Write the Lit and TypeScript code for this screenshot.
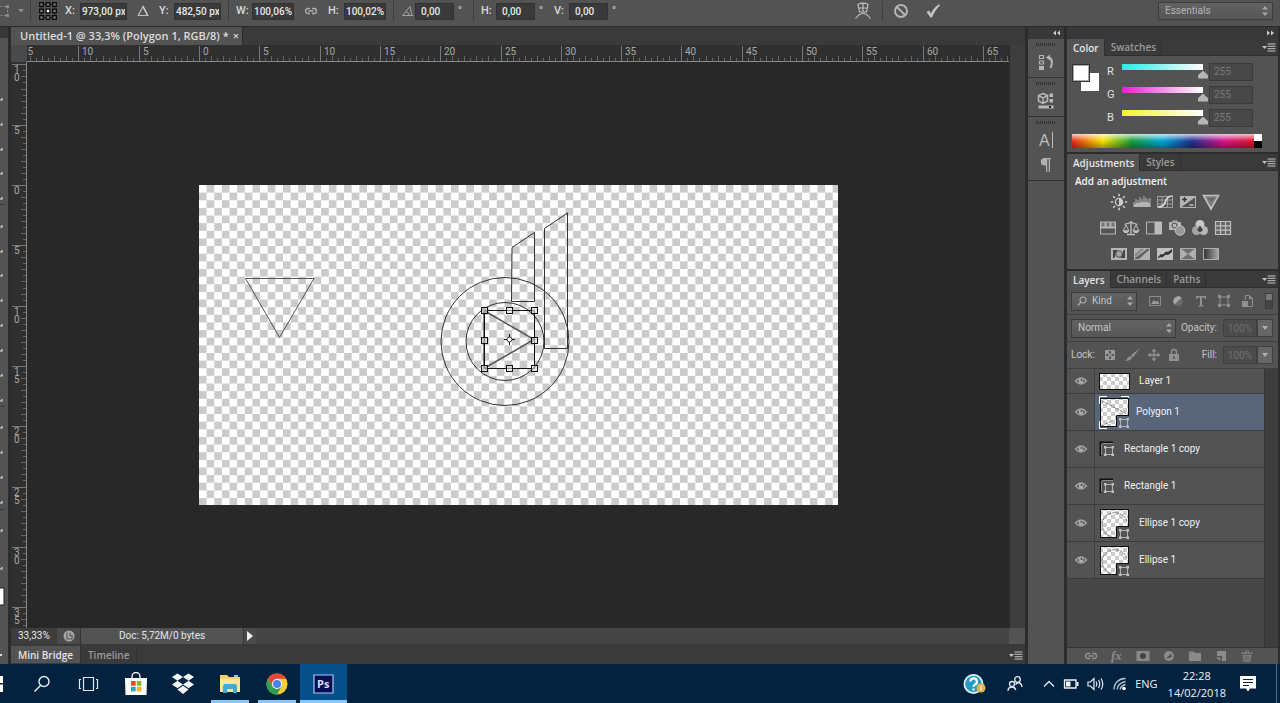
import { LitElement, html, svg, css } from "lit";
import { customElement } from "lit/decorators.js";
import { classMap } from "lit/directives/class-map.js";

const UNIT = 12.06;

const icons: Record<string, [number, number, unknown]> = {
  transform: [14, 16, svg`<path d="M-3 3.500H7.500V12.500H-3" fill="none" stroke="#8a8a8a" stroke-dasharray="2 1.500"/><path d="M6 2h3v3H6zM6 11h3v3H6z" fill="#8a8a8a"/>`],
  caret: [6, 4, svg`<path d="M0 0h6L3 3.500z" fill="#8f8f8f"/>`],
  refpoint: [20, 20, svg`<path d="M3.500 3.500h13v13h-13z" fill="none" stroke="#222"/>${[0, 1, 2].map((r) => [0, 1, 2].map((c) => svg`<rect x=${1 + c * 6.5} y=${1 + r * 6.5} width="5" height="5" fill="#0c0c0c"/><rect x=${2.3 + c * 6.5} y=${2.3 + r * 6.5} width="2.400" height="2.400" fill=${r === 1 && c === 1 ? "#fff" : "#777"}/>`))}`],
  delta: [12, 12, svg`<path d="M6 1.500 10.700 10.500H1.300z" fill="none" stroke="#bdbdbd" stroke-width="1.200"/><path d="M6 1.500 10.700 10.500" stroke="#c8c8c8" stroke-width="1.500"/>`],
  link: [14, 10, svg`<path d="M6 7.500H4a2.500 2.500 0 0 1 0-5h2M8 2.500h2a2.500 2.500 0 0 1 0 5H8M4.500 5h5" fill="none" stroke="#b0b0b0" stroke-width="1.300"/>`],
  angle: [14, 12, svg`<path d="M9 1.500 1.500 10.500H12.500M9 1.500 11 10.500M5 6.500q3 1 3 4" fill="none" stroke="#a4a4a4"/>`],
  warp: [18, 20, svg`<path d="M4 3.500Q9 .8 14 3.500L12.500 11H5.500zM4.500 7.500Q9 6 13.500 7.500M9 2v9M1.500 17.500Q9 7.500 16.500 17.500" fill="none" stroke="#c0c0c0" stroke-width="1.200"/>`],
  cancel: [16, 16, svg`<circle cx="8" cy="8" r="6" fill="none" stroke="#b4b4b4" stroke-width="2"/><path d="m4 4 8 8" stroke="#b4b4b4" stroke-width="2"/>`],
  check: [16, 16, svg`<path d="M1.500 9 4 7.500 6 10.500Q9 4 14 1.200L15 2.500Q10 7 7 14.500H5.500z" fill="#c4c4c4"/>`],
  updown: [8, 12, svg`<path d="M1 4.500 4 1l3 3.500zM1 7.500h6L4 11z" fill="#a8a8a8"/>`],
  down: [8, 6, svg`<path d="M1 1h6L4 5z" fill="#b0b0b0"/>`],
  menu: [14, 9, svg`<path d="M0 3h5L2.500 6z" fill="#c4c4c4"/><path d="M5.500 1h8M5.500 3.300h8M5.500 5.700h8M5.500 8h8" stroke="#c4c4c4"/>`],
  collapse: [9, 6, svg`<path d="M4 .5v5L1 3zM8 .5v5L5 3z" fill="#ccc"/>`],
  expand: [9, 6, svg`<path d="M1 .5v5L4 3zM5 .5v5L8 3z" fill="#ccc"/>`],
  history: [18, 18, svg`<path d="M2.500 2.500h4v3h-4zM2.500 8h4v3h-4z" fill="none" stroke="#b4b4b4" stroke-width="1.200"/><path d="M2 13h5v4H2z" fill="#b4b4b4"/><path d="M9 4.500 13 1.500v6z" fill="#b4b4b4"/><path d="M12 4.500q5 2.500 1.500 10.500" fill="none" stroke="#b4b4b4" stroke-width="2"/>`],
  props: [18, 18, svg`<path d="M6 1.500 10.500 3.500V9L6 11.300 1.500 9V3.500zM1.500 3.700 6 6l4.500-2.300M6 6v5" fill="none" stroke="#b8b8b8" stroke-width="1.500"/><path d="M12.500 1.500h3.500V5h-3.500zM12.500 7h3.500v3.500h-3.500zM1.500 13.500h15v3H1.500z" fill="#b8b8b8"/><path d="M12 15h2" stroke="#222" stroke-width="2"/>`],
  character: [18, 18, svg`<path d="M15.500 1v16" stroke="#bdbdbd"/><text x="2" y="15" font-size="16" font-family="Liberation Sans, sans-serif" fill="#bdbdbd">A</text>`],
  paragraph: [18, 18, svg`<path d="M9 9.500H7A3.800 3.800 0 0 1 7 2h7v1.300h-1V16h-1.300V3.300H10.300V16H9z" fill="#b0b0b0"/>`],
  sun: [18, 18, svg`<circle cx="9" cy="9" r="3.600" fill="none" stroke="#ccc" stroke-width="1.300"/><path d="M9 5.500a3.500 3.500 0 0 1 0 7z" fill="#ccc"/><path d="M9 .8v2.400M9 14.800v2.400M.8 9h2.400M14.800 9h2.400M3.200 3.200 5 5M13 13l1.800 1.800M3.200 14.800 5 13M13 5l1.800-1.800" stroke="#ccc" stroke-width="1.600"/>`],
  levels: [18, 18, svg`<path d="M.5 14V9h1v2h1V6h1v4h1V7h1v3h1V4h1v5h1V6h1v3h1V3h1v6h1V5h1v4h1V6h1v4h1V5h1v9z" fill="#b4b4b4"/>`],
  curves: [18, 18, svg`<path d="M1.500 3.500h15v11h-15zM1.500 7h15M1.500 11h15M6 3.500v11M11.500 3.500v11" fill="none" stroke="#a0a0a0"/><path d="M2 14q6 0 7.500-5.500T16.500 3" fill="none" stroke="#ddd" stroke-width="1.600"/>`],
  exposure: [18, 18, svg`<path d="M1 3h16v12H1z" fill="#b5b5b5"/><path d="M2.500 14 16 4.500V14z" fill="#505050"/><path d="M3 6.500h5M5.500 4v5" stroke="#333" stroke-width="1.300"/><path d="M10.500 12h4" stroke="#ccc" stroke-width="1.300"/>`],
  vibrance: [18, 18, svg`<path d="M1.500 2.500h15L9 16z" fill="#7d7d7d" stroke="#c0c0c0" stroke-width="1.600"/><path d="M5 5h8L9 9z" fill="#6a6a6a"/>`],
  hue: [18, 18, svg`<path d="M1 2.500h16v13H1z" fill="#b5b5b5"/><path d="M2 9.500h14v5H2z" fill="#555"/><path d="M2.500 3.500h3v4h-3zM7.500 3.500h3v4h-3zM12.500 3.500h3v4h-3z" fill="#757575"/>`],
  balance: [18, 18, svg`<path d="M9 2v13M2.500 5.500 9 3.500l6.500 2M5 15.500h8" stroke="#c0c0c0" fill="none" stroke-width="1.300"/><path d="M4 6 1 12h6zM14 6l-3 6h6z" fill="none" stroke="#c0c0c0"/><path d="M.8 11.500h6.400L5.500 14h-3zM10.800 11.500h6.400L15.500 14h-3z" fill="#c0c0c0"/>`],
  bw: [18, 18, svg`<path d="M1.500 3h15v12h-15z" fill="#555" stroke="#b5b5b5"/><path d="M9.500 3h7v12h-7z" fill="#bbb"/>`],
  photo: [18, 18, svg`<path d="M1 3h3l1-1.500h4L10 3h3v8H1z" fill="#b5b5b5"/><circle cx="6.500" cy="6.500" r="2.500" fill="#b5b5b5" stroke="#444"/><circle cx="12" cy="11.500" r="4.800" fill="#989898" stroke="#c8c8c8"/>`],
  mixer: [18, 18, svg`<circle cx="9" cy="5.500" r="4.500" fill="#c8c8c8"/><circle cx="5.500" cy="11.500" r="4.500" fill="#a5a5a5"/><circle cx="12.500" cy="11.500" r="4.500" fill="#b8b8b8"/><path d="M9 6.500 12 11 9 13.500 6 11z" fill="#444"/>`],
  lookup: [18, 18, svg`<path d="M1.500 2.500h15v13h-15zM1.500 6.800h15M1.500 11.200h15M6.500 2.500v13M11.500 2.500v13" fill="#666" stroke="#c0c0c0" stroke-width="1.200"/>`],
  invert: [18, 18, svg`<path d="M1 3h16v12H1z" fill="#b5b5b5"/><path d="M3 5h4.500L4.500 13H3zM15 13h-4.500l3-8H15z" fill="#444"/><circle cx="9" cy="9" r="3.300" fill="#a4a4a4" stroke="#555"/>`],
  posterize: [18, 18, svg`<path d="M1 3h16v12H1z" fill="#b0b0b0"/><path d="M2 13 14 4h2v1L6 14H2z" fill="#626262"/><path d="M2 9 8 4h3L2 12z" fill="#858585"/>`],
  threshold: [18, 18, svg`<path d="M1 3h16v12H1z" fill="#c0c0c0"/><path d="m2 12 3-3 2 .5 3-3 2 .5 4-3v3l-4 3-2-.5-4 3-2-.5-2 1.500z" fill="#333"/>`],
  selective: [18, 18, svg`<path d="M1 3h16v12H1z" fill="#707070"/><path d="m1 3 8 6-8 6zM17 3 9 9l8 6z" fill="#b0b0b0"/><path d="M1.500 3.500h15v11h-15z" fill="none" stroke="#aaa"/>`],
  gradient: [18, 18, svg`<defs><linearGradient id="gm"><stop stop-color="#303030"/><stop offset="1" stop-color="#aaa"/></linearGradient></defs><path d="M1.500 3.500h15v11h-15z" fill="url(#gm)" stroke="#b0b0b0"/>`],
  search: [10, 10, svg`<circle cx="6" cy="4" r="3" fill="none" stroke="#aaa" stroke-width="1.200"/><path d="M4 6 1 9.500" stroke="#aaa" stroke-width="1.300"/>`],
  pixel: [14, 14, svg`<path d="M1.500 2.500h11v9h-11z" fill="none" stroke="#8c8c8c"/><path d="m3 10 3-4 2 2 1.500-1.500L11.500 10z" fill="#999"/>`],
  adjust: [14, 14, svg`<circle cx="7" cy="7" r="5" fill="#6c6c6c"/><path d="M3.500 10.500A5 5 0 0 1 10.500 3.500z" fill="#aaa"/>`],
  type: [14, 14, svg`<path d="M2 2h10v3h-1l-.5-1.500H8V11l1.500.5v1h-5v-1L6 11V3.500H3.500L3 5H2z" fill="#909090"/>`],
  shape: [14, 14, svg`<path d="M3 3h8v8H3z" fill="none" stroke="#909090"/><path d="M1 1h3v3H1zM10 1h3v3h-3zM1 10h3v3H1zM10 10h3v3h-3z" fill="#909090"/>`],
  smart: [14, 14, svg`<path d="M5.500 6V1.500h4l3 3v8H8" fill="none" stroke="#909090"/><path d="M9 1v4h4zM2 7h6v6H2z" fill="#909090"/>`],
  lockpix: [14, 14, svg`<path d="M2.500 2.500h9v9h-9z" fill="none" stroke="#999"/><path d="M3 3h3v3H3zM8 3h3v3H8zM5.500 5.500h3v3h-3zM3 8h3v3H3zM8 8h3v3H8z" fill="#999"/>`],
  brush: [16, 14, svg`<path d="M15.500.5 9 9.500 6.500 7.500z" fill="#909090"/><path d="M8 10Q6 13.500.5 12.500 3 12 3.500 10T7 8.500z" fill="#909090"/>`],
  move: [14, 14, svg`<path d="M7 2v10M2 7h10" stroke="#909090" stroke-width="1.300"/><path d="M7 .5 9.500 3.500h-5zM7 13.500l2.500-3h-5zM.5 7l3-2.500v5zM13.500 7l-3-2.500v5z" fill="#909090"/>`],
  lock: [12, 14, svg`<path d="M3.500 6V4a2.500 2.500 0 0 1 5 0v2" fill="none" stroke="#909090" stroke-width="1.500"/><path d="M1 6h10v7H1z" fill="#909090"/><path d="M6 8v3" stroke="#555" stroke-width="1.500"/>`],
  eye: [14, 12, svg`<path d="M1.500 6Q7 0 12.500 6 7 12 1.500 6z" fill="none" stroke="#a4a4a4" stroke-width="1.300"/><circle cx="7" cy="6" r="2.400" fill="#b0b0b0"/><circle cx="7.500" cy="5" r="1" fill="#444"/>`],
  fx: [14, 14, svg`<text x="1" y="11" font-size="13" font-style="italic" font-weight="700" font-family="Liberation Serif, serif" fill="#8a8a8a">fx</text>`],
  mask: [14, 14, svg`<path d="M.5 2h13v10H.5z" fill="#8a8a8a"/><circle cx="7" cy="7" r="3" fill="#444"/>`],
  fill: [14, 14, svg`<circle cx="7" cy="7" r="5" fill="#8a8a8a"/><path d="M4 9.500 9.500 4.500V8z" fill="#484848"/>`],
  folder: [14, 14, svg`<path d="M1 2.500h5l1 1.500h6v8H1z" fill="#8a8a8a"/>`],
  page: [14, 14, svg`<path d="M3 2h9v10H8V7H3z" fill="#8a8a8a"/><path d="M2 8.500h4.500V12z" fill="#8a8a8a"/>`],
  trash: [14, 14, svg`<path d="M2.500 6h9l-1 7h-7zM1.500 3.500h11V5h-11zM5 1.500h4V4H8V2.500H6V4H5z" fill="#7e7e7e"/><path d="M5 7v5M7 7v5M9 7v5" stroke="#555" stroke-width=".7"/>`],
  proxy: [14, 14, svg`<circle cx="7" cy="7" r="5.500" fill="#a8a8a8"/><path d="M5 3.500v6.500h5V6.500H8V3.500" fill="none" stroke="#555" stroke-width="1.200"/>`],
  play: [8, 10, svg`<path d="M1 0v10l6-5z" fill="#eee"/>`],
  tsearch: [18, 18, svg`<circle cx="11" cy="6.500" r="5" fill="none" stroke="#e8eef4" stroke-width="1.400"/><path d="M7.500 10.500 1.500 16.500" stroke="#e8eef4" stroke-width="1.400"/>`],
  taskview: [22, 16, svg`<path d="M5.500 1.500h10v13h-10zM3 3.500H1.500v9H3M18 3.500h1.500v9H18" fill="none" stroke="#e0e8f0" stroke-width="1.200"/>`],
  store: [24, 24, svg`<path d="M8 7V4.500a4 4 0 0 1 8 0V7" fill="none" stroke="#fff" stroke-width="1.300"/><path d="M1 6h22l-.5 17h-21z" fill="#fff"/><path d="M7 9h4.700v4.700H7z" fill="#e34a26"/><path d="M12.700 9h4.700v4.700h-4.700z" fill="#7fb82a"/><path d="M7 14.700h4.700v4.700H7z" fill="#27a0d8"/><path d="M12.700 14.700h4.700v4.700h-4.700z" fill="#f5b31d"/>`],
  dropbox: [24, 22, svg`<path d="m6.500.5 5.500 3.600-5.500 3.700L1 4.100zM17.500.5 23 4.100l-5.500 3.700L12 4.100zM1 11.500l5.500-3.700 5.500 3.700-5.500 3.700zM17.500 7.800l5.500 3.700-5.500 3.700-5.500-3.700zM6.500 16.500l5.500-3.700 5.500 3.700-5.500 4.500z" fill="#f4f7fa"/>`],
  explorer: [22, 20, svg`<path d="M1 1h7l2 2h11v15H1z" fill="#f3cf6b"/><path d="M1 5h20v13H1z" fill="#fbe59a"/><path d="M4 19v-7q0-2 2-2h10q2 0 2 2v7h-4v-4H8v4z" fill="#42a8d4"/><path d="M15 1h4v2h-4z" fill="#8fd0a0"/>`],
  chrome: [22, 22, svg`<circle cx="11" cy="11" r="10.500" fill="#f7cb3c"/><path d="M11 5.750h9.100A10.500 10.500 0 0 0 1.900 5.750L6.500 13.500z" fill="#e2483a"/><path d="M1.900 5.750A10.500 10.500 0 0 0 11 21.500l4.600-8L11 16 6.400 13.500z" fill="#2f9e55"/><circle cx="11" cy="11" r="5" fill="#fff"/><circle cx="11" cy="11" r="4" fill="#4486ee"/>`],
  ps: [22, 20, svg`<path d="M1 1h19v18H1z" fill="#0a0d52" stroke="#a9c8f5" stroke-width="1.200"/><text x="4" y="14" font-size="11" font-weight="700" font-family="Open Sans, sans-serif" fill="#cfe0ff">Ps</text>`],
  start: [4, 16, svg`<path d="M0 0h3v7H0zM0 8.500h3V16H0z" fill="#fff"/>`],
  help: [24, 22, svg`<circle cx="10.500" cy="11" r="10" fill="#e8f6fb"/><circle cx="10.500" cy="11" r="8.300" fill="#249ac4"/><path d="M7.500 8.500a3.200 3.200 0 1 1 4.500 3q-1.500.8-1.500 2.500M10.500 15.500v2" fill="none" stroke="#fff" stroke-width="2.200"/><circle cx="18" cy="15" r="4.500" fill="#eab04a"/><path d="M18 12.500v5" stroke="#fff3cf" stroke-width="1.500"/>`],
  people: [16, 18, svg`<circle cx="10.500" cy="4.500" r="2.800" fill="none" stroke="#e4ebf2" stroke-width="1.300"/><circle cx="5" cy="9" r="2.500" fill="none" stroke="#e4ebf2" stroke-width="1.300"/><path d="M1 16q0-4 4-4 3 0 3.800 3M8.500 9.500q2-2 4-1.500t2.500 4" fill="none" stroke="#e4ebf2" stroke-width="1.300"/>`],
  chevron: [12, 8, svg`<path d="m1 6.500 5-5 5 5" fill="none" stroke="#e4ebf2" stroke-width="1.300"/>`],
  battery: [16, 12, svg`<path d="M1.500 2h11.500v8H1.500z" fill="none" stroke="#f0f4f8" stroke-width="1.300"/><path d="M3 3.500h4.500v5H3zM13.500 4h2v4h-2z" fill="#f0f4f8"/>`],
  volume: [18, 14, svg`<path d="M1 5h2.500L7 1.500v11L3.500 9H1z" fill="none" stroke="#e4ebf2" stroke-width="1.200"/><path d="M9 4.500q1.500 2.500 0 5M11.500 3q2.500 4 0 8M14 1.500q3.500 5.500 0 11" fill="none" stroke="#e4ebf2" stroke-width="1.200"/>`],
  wifi: [14, 14, svg`<path d="M1 12.500A11 11 0 0 1 12.500 1.500M4 12.500Q5 6 12.500 4.500M7 12.500Q8 8.500 12.500 7.500" fill="none" stroke="#b8c8d6" stroke-width="1.300"/><circle cx="11" cy="11.500" r="1.800" fill="#fff"/>`],
  notes: [18, 18, svg`<path d="M1 1h16v12.500H11L9 16.500 7 13.500H1z" fill="#fff"/><path d="M4 4.500h10M4 7.500h10M4 10.500h6" stroke="#042240" stroke-width="1.200"/>`],
};

const icon = (name: string) => {
  const [w, h, body] = icons[name];
  return html`<svg class="ico" width=${w} height=${h} viewBox="0 0 ${w} ${h}" aria-hidden="true">${body}</svg>`;
};

const tabs = (names: string[]) => html`
  <div class="tabs">
    ${names.map((n, i) => html`<button class=${classMap({ tab: true, on: i === 0 })}>${n}</button>`)}
    <button class="menu" aria-label="Panel menu">${icon("menu")}</button>
  </div>`;

const checker = (id: string, cell: number) => svg`
  <pattern id=${id} width=${cell * 2} height=${cell * 2} patternUnits="userSpaceOnUse">
    <rect width=${cell * 2} height=${cell * 2} fill="#fff"/>
    <rect x=${cell} width=${cell} height=${cell} fill="#cbcbcb"/>
    <rect y=${cell} width=${cell} height=${cell} fill="#cbcbcb"/>
  </pattern>`;

const base = css`
  * { box-sizing: border-box; }
  button, input, select { font: inherit; color: inherit; margin: 0; border: 0; padding: 0; background: none; border-radius: 0; }
  .ico { display: block; flex: none; }
  .tabs { display: flex; height: 17px; background: #3a3a3a; border-bottom: 1px solid #2e2e2e; font: 600 10px/16px "Open Sans", sans-serif; color: #9a9a9a; }
  .tab { padding: 0 5px 0 6px; border-right: 1px solid #303030; height: 16px; white-space: nowrap; }
  .tab.on { background: #535353; color: #e4e4e4; height: 17px; }
  .menu { margin-left: auto; padding: 0 2px; }
`;

@customElement("options-bar")
class OptionsBar extends LitElement {
  static styles = [base, css`
    :host { display: flex; align-items: center; height: 27px; flex: none; padding-bottom: 4px; background: #535353; border-bottom: 1px solid #2b2b2b; color: #d8d8d8; font: 11px/16px Roboto, sans-serif; }
    .sep { width: 1px; height: 20px; background: #3e3e3e; margin: 0 7px; }
    .field { display: flex; align-items: center; }
    .field span { width: 15px; font-weight: 500; }
    .field input { height: 17px; width: 47px; text-align: right; background: #3a3a3a; border: 1px solid #323232; color: #e8e8e8; font-size: 10px; font-weight: 500; padding: 0 1px; }
    .mid span { width: 16px; }
    .mid input { width: 42px; }
    .short input { width: 39px; text-align: left; padding-left: 5px; }
    .deg { width: 12px; padding-left: 4px; }
    .deg + .field { margin-left: 7px; }
    .gap { padding: 0 10px; }
    .start { display: flex; align-items: center; width: 23px; gap: 4px; }
    .anchor { margin-right: 7px; }
    .spacer { flex: 1; }
    .commit { display: flex; align-items: center; margin-right: 214px; }
    .commit button { padding: 0 3px; }
    .commit .check { padding-left: 13px; }
    .space { display: grid; width: 115px; height: 18px; margin-right: 7px; align-items: center; background: linear-gradient(#626262, #565656); border: 1px solid #3c3c3c; }
    .space > * { grid-area: 1 / 1; }
    .space select { appearance: none; width: 100%; padding-left: 6px; color: #b5b5b5; font-size: 10px; }
    .space .ico { justify-self: end; margin-right: 3px; pointer-events: none; }
  `];
  field(label: string, value: string, kind = "") {
    return html`<label class="field ${kind}">${label ? html`<span>${label}</span>` : ""}<input .value=${value} aria-label=${label || "Angle"}></label>`;
  }
  render() {
    return html`
      <div class="start">${icon("transform")}${icon("caret")}</div>
      <div class="sep"></div>
      <button class="anchor" aria-label="Reference point">${icon("refpoint")}</button>
      ${this.field("X:", "973,00 px")}
      <div class="gap">${icon("delta")}</div>
      ${this.field("Y:", "482,50 px")}
      <div class="sep"></div>
      ${this.field("W:", "100,06%", "mid")}
      <div class="gap">${icon("link")}</div>
      ${this.field("H:", "100,02%", "mid")}
      <div class="sep"></div>
      ${icon("angle")}
      ${this.field("", "0,00", "short")}<span class="deg">°</span>
      <div class="sep"></div>
      ${this.field("H:", "0,00", "short")}<span class="deg">°</span>
      ${this.field("V:", "0,00", "short")}<span class="deg">°</span>
      <div class="spacer"></div>
      <div class="commit">
        <button aria-label="Warp">${icon("warp")}</button>
        <div class="sep"></div>
        <button aria-label="Cancel">${icon("cancel")}</button>
        <button class="check" aria-label="Commit">${icon("check")}</button>
      </div>
      <div class="space"><select aria-label="Workspace"><option>Essentials</option></select>${icon("updown")}</div>`;
  }
}

@customElement("document-window")
class DocumentWindow extends LitElement {
  static styles = [base, css`
    :host { display: flex; flex-direction: column; flex: 1; min-width: 0; margin-left: 3px; background: #383838; color: #d8d8d8; font: 11px/16px Roboto, sans-serif; }
    .titles { display: flex; height: 18px; background: #3a3a3a; }
    .title { display: flex; align-items: center; gap: 4px; padding: 0 3px 0 9px; background: #535353; border-right: 1px solid #2c2c2c; font: 600 11px/18px "Open Sans", sans-serif; white-space: nowrap; color: #dcdcdc; }
    .view { flex: 1; min-height: 0; display: grid; grid-template: 17px minmax(0, 1fr) / 16px minmax(0, 1fr) 16px; background: #2f2f2f; }
    .corner { background: #4a4a4a; }
    .ruler { display: block; width: 100%; height: 100%; overflow: hidden; }
    .ruler text { font: 10px Roboto, sans-serif; fill: #a8a8a8; }
    .board { background: #282828; display: flex; align-items: center; justify-content: center; overflow: hidden; }
    .bar { background: #3e3e3e; border-left: 1px solid #2a2a2a; }
    .status { display: flex; height: 16px; background: #444; align-items: stretch; font-size: 10px; line-height: 16px; color: #e6e6e6; }
    .zoom { width: 46px; padding: 0 0 0 7px; background: #3d3d3d; color: inherit; }
    .proxy { width: 23px; display: grid; place-items: center; background: #4a4a4a; }
    .doc { width: 163px; text-align: center; background: #535353; border-left: 1px solid #333; }
    .go { width: 13px; display: grid; place-items: center; background: #4a4a4a; border-left: 1px solid #333; }
    .grip { width: 16px; margin-left: auto; background: #535353; }
    .tabs { margin-top: 2px; height: 18px; border: 0; }
    .tab, .tab.on { height: 17px; padding: 0 7px; }
  `];
  horizontal() {
    const out = [];
    for (let i = -30; i <= 134; i++) {
      const x = Math.round(172 + (i * UNIT) / 2);
      const major = i % 10 === 0;
      out.push(svg`<path d="M${x + 0.5} ${major ? 1 : i % 2 ? 13 : 11}V16" stroke=${major ? "#777" : "#666"}/>`);
      if (major) out.push(svg`<text x=${x + 4} y="10">${Math.abs(i / 2)}</text>`);
    }
    return out;
  }
  vertical() {
    const out = [];
    for (let i = -20; i <= 75; i++) {
      const y = Math.round(123 + (i * UNIT) / 2);
      const major = i % 10 === 0;
      out.push(svg`<path d="M${major ? 1 : i % 2 ? 12 : 10} ${y + 0.5}H15" stroke=${major ? "#777" : "#666"}/>`);
      if (major) String(Math.abs(i / 2)).split("").forEach((d, n) => out.push(svg`<text x="3" y=${y + 9 + n * 8}>${d}</text>`));
    }
    return out;
  }
  artwork() {
    const handles = [[285, 125], [310, 125], [335, 125], [285, 155], [335, 155], [285, 183], [310, 183], [335, 183]];
    return html`<svg width="639" height="320" viewBox="0 0 639 320" role="img" aria-label="Artwork">
      <defs>${checker("board", 7.635)}</defs>
      <rect width="639" height="320" fill="url(#board)"/>
      <g fill="none" stroke="#333">
        <path d="M46.500 93.500H115L80.500 152.500z" stroke="#555"/>
        <circle cx="306" cy="156.500" r="64"/>
        <circle cx="306" cy="156.500" r="39"/>
        <path d="M313 62.500 335.500 47.500V116.500H312.500z"/>
        <path d="M345.500 43.500 368.500 28V163.500H345.500z"/>
        <path d="M285 125.500 335 154.500 285 183.500z" stroke="#555" stroke-width="1.500"/>
        <path d="M285.500 125.500H335.500V183.500H285.500z" stroke="#111"/>
        ${handles.map(([x, y]) => svg`<rect x=${x - 2.5} y=${y - 2.5} width="6" height="6" stroke="#111" fill="#ddd" fill-opacity=".6"/>`)}
        <circle cx="310.500" cy="154.500" r="2.500" fill="#fff"/>
        <path d="M310.500 149v3M310.500 157v3M305 154.500h3M313 154.500h3" stroke="#111"/>
      </g>
    </svg>`;
  }
  render() {
    return html`
      <div class="titles"><div class="title"><span>Untitled-1 @ 33,3% (Polygon 1, RGB/8) *</span><button aria-label="Close">×</button></div></div>
      <div class="view">
        <div class="corner"></div>
        <svg class="ruler">${this.horizontal()}<path d="M0 16.500H4000" stroke="#888"/></svg>
        <div class="bar"></div>
        <svg class="ruler">${this.vertical()}<path d="M15.500 0V4000" stroke="#888"/></svg>
        <div class="board">${this.artwork()}</div>
        <div class="bar"></div>
      </div>
      <div class="status">
        <input class="zoom" aria-label="Zoom" .value=${"33,33%"}>
        <div class="proxy">${icon("proxy")}</div>
        <div class="doc">Doc: 5,72M/0 bytes</div>
        <button class="go" aria-label="Status options">${icon("play")}</button>
        <div class="grip"></div>
      </div>
      ${tabs(["Mini Bridge", "Timeline"])}`;
  }
}

@customElement("color-panel")
class ColorPanel extends LitElement {
  static styles = [base, css`
    :host { display: block; background: #535353; color: #e0e0e0; font: 11px/16px Roboto, sans-serif; height: 113px; }
    .body { padding: 4px 0 0 5px; }
    .mix { display: flex; height: 74px; }
    .swatches { width: 35px; padding-top: 4px; display: grid; grid-template: repeat(3, 9px) / repeat(3, 9px); align-content: start; }
    .front { grid-area: 1 / 1 / 3 / 3; background: #fff; border: 1px solid #333; outline: 1px solid #aaa; outline-offset: -2px; z-index: 1; }
    .back { grid-area: 2 / 2 / 4 / 4; background: #fff; }
    .row { display: flex; align-items: center; height: 23px; }
    .row span { width: 15px; }
    .slide { width: 81px; height: 15px; margin-right: 6px; }
    .track { height: 6px; }
    .r { background: linear-gradient(90deg, #2fe6e6, #fff); }
    .g { background: linear-gradient(90deg, #e61fd6, #fff); }
    .b { background: linear-gradient(90deg, #f4f42a, #fff); }
    input[type="range"] { appearance: none; display: block; width: 91px; height: 9px; margin-left: -5px; }
    input[type="range"]::-webkit-slider-thumb { appearance: none; width: 10px; height: 8px; background: #b5b5b5; clip-path: polygon(50% 0, 100% 60%, 100% 100%, 0 100%, 0 60%); }
    .val { width: 44px; height: 18px; background: #484848; border: 1px solid #3a3a3a; color: #7a7a7a; padding-left: 4px; font-size: 10px; }
    .ramp { display: flex; width: 190px; height: 14px; }
    .hues { flex: 1; background: linear-gradient(rgba(255,255,255,.75), rgba(255,255,255,0) 50%, rgba(0,0,0,.35)), linear-gradient(90deg, #e8281c, #f6e500 17%, #17a03c 33%, #00a6dc 50%, #23318f 66%, #d8148c 83%, #d81a28); }
    .ends { width: 8px; background: linear-gradient(#fff 50%, #000 50%); }
  `];
  render() {
    return html`${tabs(["Color", "Swatches"])}
      <div class="body">
        <div class="mix">
          <div class="swatches"><div class="front"></div><div class="back"></div></div>
          <div>${["R", "G", "B"].map((c) => html`
            <div class="row"><span>${c}</span>
              <div class="slide"><div class="track ${c.toLowerCase()}"></div><input type="range" max="255" .value=${"255"} aria-label="${c} slider"></div>
              <input class="val" .value=${"255"} aria-label=${c}>
            </div>`)}</div>
        </div>
        <div class="ramp"><div class="hues"></div><div class="ends"></div></div>
      </div>`;
  }
}

@customElement("adjustments-panel")
class AdjustmentsPanel extends LitElement {
  static styles = [base, css`
    :host { display: block; background: #535353; height: 115px; }
    h2 { margin: 0; padding: 2px 0 0 8px; font: 600 10px/16px "Open Sans", sans-serif; color: #f4f4f4; }
    .row { display: flex; justify-content: center; gap: 5px; height: 26px; align-items: center; padding-right: 15px; }
  `];
  render() {
    const rows = [["sun", "levels", "curves", "exposure", "vibrance"], ["hue", "balance", "bw", "photo", "mixer", "lookup"], ["invert", "posterize", "threshold", "selective", "gradient"]];
    return html`${tabs(["Adjustments", "Styles"])}<h2>Add an adjustment</h2>
      ${rows.map((r) => html`<div class="row">${r.map((n) => html`<button aria-label=${n}>${icon(n)}</button>`)}</div>`)}`;
  }
}

type Layer = { name: string; kind: "flat" | "shape" | "small"; art?: string; on?: boolean };

@customElement("layers-panel")
class LayersPanel extends LitElement {
  static styles = [base, css`
    :host { display: flex; flex-direction: column; flex: 1; min-height: 0; background: #535353; color: #c4c4c4; font: 10px/16px Roboto, sans-serif; }
    .row { display: flex; align-items: center; height: 27px; padding: 0 5px 0 4px; border-bottom: 1px solid #404040; }
    .pick { display: grid; align-items: center; height: 19px; background: linear-gradient(#626262, #575757); border: 1px solid #3c3c3c; }
    .pick > * { grid-area: 1 / 1; }
    .pick select { appearance: none; width: 100%; height: 17px; padding-left: 6px; }
    .pick .ico:last-child { justify-self: end; margin-right: 2px; pointer-events: none; }
    .kind { width: 66px; }
    .kind .ico:first-child { margin-left: 5px; pointer-events: none; }
    .kind select { padding-left: 20px; }
    .mode { width: 105px; }
    .filters { display: flex; gap: 9px; margin-left: 11px; }
    .toggle { margin-left: auto; width: 8px; height: 16px; background: linear-gradient(#777 40%, #444 40%); border: 1px solid #3c3c3c; }
    .amount { display: flex; align-items: center; margin-left: auto; gap: 6px; }
    .amount div { display: flex; }
    .amount input { width: 34px; height: 18px; text-align: right; padding-right: 4px; background: #4c4c4c; border: 1px solid #404040; color: #707070; }
    .amount button { width: 16px; height: 18px; display: grid; place-items: center; background: #666; border: 1px solid #404040; }
    .locks { display: flex; gap: 7px; align-items: center; margin-left: 8px; }
    .main { flex: 1; min-height: 0; display: flex; background: #464646; }
    .list { flex: 1; min-width: 0; margin: 0; padding: 0; list-style: none; color: #f0f0f0; }
    .scroll { width: 14px; background: #3d3d3d; border-left: 1px solid #333; }
    .layer { display: flex; align-items: center; height: 37px; background: #535353; border-bottom: 1px solid #3c3c3c; }
    .layer.flat { height: 25px; }
    .eye { width: 28px; height: 100%; display: grid; place-items: center; border-right: 1px solid #404040; }
    .body { flex: 1; height: 100%; display: flex; align-items: center; gap: 9px; padding-left: 4px; }
    .on .body { background: #596579; gap: 6px; }
    .foot { display: flex; justify-content: center; gap: 12px; align-items: center; height: 17px; border-top: 1px solid #333; padding-right: 8px; }
    .foot button:first-child { opacity: .7; }
  `];
  thumb(l: Layer, i: number) {
    const id = "t" + i;
    if (l.kind === "flat") return html`<svg class="ico" width="31" height="17"><defs>${checker(id, 4)}</defs><rect x=".5" y=".5" width="30" height="16" fill="url(#${id})" stroke="#111"/></svg>`;
    const badge = (x: number, y: number) => svg`<g transform="translate(${x} ${y})"><rect x="-2" y="-2" width="13" height="13" fill=${l.on ? "#596579" : "#535353"}/><path d="M1.500 1.500h7v7h-7z" fill="none" stroke="#b0b0b0"/><path d="M0 0h2.500v2.500H0zM7.500 0H10v2.500H7.500zM0 7.500h2.500V10H0zM7.500 7.500H10V10H7.500z" fill="#c0c0c0"/></g>`;
    if (l.kind === "small") return html`<svg class="ico" width="16" height="16"><path d="M1.500 15V1.500H14" fill="none" stroke="#111" stroke-width="2"/><path d="M3 14V3H14" fill="none" stroke="#e4e4e4"/>${badge(5, 5)}</svg>`;
    return html`<svg class="ico" width="31" height="33"><defs>${checker(id, 4)}</defs>
      ${l.on ? svg`<path d="M.5 8V.5H8M22 .5h7.500V8M.5 25v7.500H8M22 32.500h7.500V25" fill="none" stroke="#fff"/>` : ""}
      <rect x="1.500" y="2.500" width="28" height="28" fill="url(#${id})" stroke="#111"/>
      <path d=${l.art ?? ""} fill="none" stroke="#777" stroke-dasharray="3 1"/>
      <path d="M17.500 31V19.500H30" fill="none" stroke="#111"/>${badge(20, 22)}</svg>`;
  }
  amount(label: string, id: string) {
    return html`<div class="amount"><label for=${id}>${label}</label><div><input id=${id} .value=${"100%"}><button aria-label="${label} slider">${icon("down")}</button></div></div>`;
  }
  render() {
    const ring = "M3 17A13 13 0 0 1 28 14M3 17Q4 27 13 30";
    const layers: Layer[] = [
      { name: "Layer 1", kind: "flat" },
      { name: "Polygon 1", kind: "shape", art: "M3 5 28 18M3 30 14 24", on: true },
      { name: "Rectangle 1 copy", kind: "small" },
      { name: "Rectangle 1", kind: "small" },
      { name: "Ellipse 1 copy", kind: "shape", art: ring },
      { name: "Ellipse 1", kind: "shape", art: ring },
    ];
    return html`${tabs(["Layers", "Channels", "Paths"])}
      <div class="row">
        <div class="pick kind">${icon("search")}<select aria-label="Filter"><option>Kind</option></select>${icon("updown")}</div>
        <div class="filters">${["pixel", "adjust", "type", "shape", "smart"].map((n) => html`<button aria-label=${n}>${icon(n)}</button>`)}</div>
        <button class="toggle" aria-label="Toggle filter"></button>
      </div>
      <div class="row"><div class="pick mode"><select aria-label="Blend mode"><option>Normal</option></select>${icon("updown")}</div>${this.amount("Opacity:", "opacity")}</div>
      <div class="row"><span>Lock:</span><div class="locks">${["lockpix", "brush", "move", "lock"].map((n) => html`<button aria-label=${n}>${icon(n)}</button>`)}</div>${this.amount("Fill:", "fill")}</div>
      <div class="main">
        <ul class="list">${layers.map((l, i) => html`
          <li class=${classMap({ layer: true, flat: l.kind === "flat", on: !!l.on })}>
            <button class="eye" aria-label="Visibility">${icon("eye")}</button>
            <div class="body">${this.thumb(l, i)}<span>${l.name}</span></div>
          </li>`)}</ul>
        <div class="scroll"></div>
      </div>
      <div class="foot">${["link", "fx", "mask", "fill", "folder", "page", "trash"].map((n) => html`<button aria-label=${n}>${icon(n)}</button>`)}</div>`;
  }
}

@customElement("task-bar")
class TaskBar extends LitElement {
  static styles = [base, css`
    :host { display: flex; align-items: stretch; height: 39px; flex: none; background: #02223f; color: #f0f4f8; font: 11px/17px "Open Sans", sans-serif; }
    .start { width: 18px; display: flex; align-items: center; }
    .app { width: 47px; display: grid; place-items: center; }
    .open { background: linear-gradient(#8cc4f4, #8cc4f4) center bottom / 38px 3px no-repeat; }
    .active { background: linear-gradient(#8cc4f4, #8cc4f4) center bottom / 100% 3px no-repeat, #06508c; }
    .tray { margin-left: auto; display: flex; align-items: center; gap: 8px; padding-right: 3px; }
    .help { margin-right: 12px; }
    .people { margin-right: 12px; }
    .clock { text-align: center; margin: 0 5px 0 2px; }
    .notes { margin-right: 11px; }
    .edge { align-self: stretch; width: 1px; background: #5a6e80; }
  `];
  render() {
    const apps: [string, string][] = [["tsearch", ""], ["taskview", ""], ["store", ""], ["dropbox", ""], ["explorer", "open"], ["chrome", "open"], ["ps", "active"]];
    return html`
      <button class="start" aria-label="Start">${icon("start")}</button>
      ${apps.map(([n, c]) => html`<button class="app ${c}" aria-label=${n}>${icon(n)}</button>`)}
      <div class="tray">
        <button class="help" aria-label="Help">${icon("help")}</button>
        <button class="people" aria-label="People">${icon("people")}</button>
        ${icon("chevron")}${icon("battery")}${icon("volume")}${icon("wifi")}
        <span>ENG</span>
        <div class="clock">22:28<br>14/02/2018</div>
        <button class="notes" aria-label="Notifications">${icon("notes")}</button>
        <div class="edge"></div>
      </div>`;
  }
}

@customElement("app-root")
class AppRoot extends LitElement {
  static styles = [base, css`
    :host { display: flex; flex-direction: column; height: 100vh; min-height: 600px; background: #2c2c2c; overflow: hidden; }
    .work { flex: 1; min-height: 0; display: flex; }
    .tools { width: 8px; background: #535353; border-top: 11px solid #383838; flex: none; overflow: hidden; }
    .strip { width: 36px; margin-left: 3px; background: #535353; display: flex; flex-direction: column; }
    .head { height: 12px; background: #383838; display: flex; justify-content: flex-end; align-items: center; padding-right: 3px; flex: none; }
    .group { display: flex; flex-direction: column; align-items: center; gap: 7px; padding: 4px 0 6px; border-bottom: 1px solid #333; }
    .dots { width: 20px; height: 3px; background: repeating-linear-gradient(90deg, #333 0 1px, #535353 1px 2px); }
    .side { width: 211px; margin: 0 2px 0 3px; display: flex; flex-direction: column; }
    .stack { display: flex; flex-direction: column; gap: 2px; flex: 1; min-height: 0; }
  `];
  render() {
    const marks = [62, 87, 112, 136, 161, 189, 214, 238, 263, 288, 313, 338, 363, 390, 415, 440, 465, 493, 531];
    return html`
      <options-bar></options-bar>
      <div class="work">
        <div class="tools"><svg class="ico" width="8" height="620">
          ${marks.map((y) => svg`<path d="M0 ${y}h2v-2" fill="none" stroke="#ddd" stroke-width="1.200"/>`)}
          ${[166, 368, 471].map((y) => svg`<path d="M0 ${y}.500h5" stroke="#3a3a3a"/>`)}
          <rect x="-1" y="550" width="5" height="17" fill="#fff" stroke="#222"/><path d="M0 617h2" stroke="#ddd" stroke-width="2"/>
        </svg></div>
        <document-window></document-window>
        <div class="strip">
          <div class="head">${icon("collapse")}</div>
          <div class="group"><div class="dots"></div>${icon("history")}</div>
          <div class="group"><div class="dots"></div>${icon("props")}</div>
          <div class="group"><div class="dots"></div>${icon("character")}${icon("paragraph")}</div>
        </div>
        <div class="side">
          <div class="head">${icon("expand")}</div>
          <div class="stack">
            <color-panel></color-panel>
            <adjustments-panel></adjustments-panel>
            <layers-panel></layers-panel>
          </div>
        </div>
      </div>
      <task-bar></task-bar>`;
  }
}
